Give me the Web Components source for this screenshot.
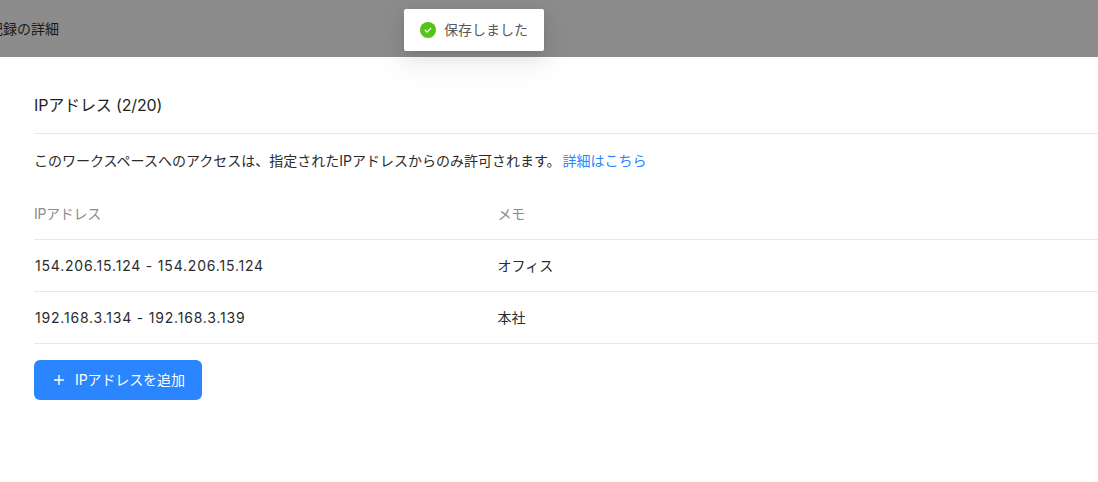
<!DOCTYPE html>
<html lang="ja">
<head>
<meta charset="utf-8">
<title>IPアドレス</title>
<style>
  html, body { margin: 0; height: 100%; background: #fff; overflow: hidden; }
  body { font-family: Inter, "Noto Sans CJK JP", sans-serif; font-size: 14px; color: #262626; }
</style>
</head>
<body>
<ip-page></ip-page>
<script>
const FONT = `Inter, "Noto Sans CJK JP", sans-serif`;

class TopBar extends HTMLElement {
  constructor() {
    super();
    this.attachShadow({ mode: 'open' }).innerHTML = `
      <style>
        :host { display: flex; align-items: center; height: 57px; background: #8c8c8c; overflow: hidden; color: #1a1a1a; font: 14px/22px ${FONT}; }
        span { margin-left: -11px; white-space: nowrap; }
      </style>
      <span><slot></slot></span>`;
  }
}

class SaveToast extends HTMLElement {
  constructor() {
    super();
    this.attachShadow({ mode: 'open' }).innerHTML = `
      <style>
        :host { position: absolute; top: 9px; left: 404px; width: 140px; height: 42px; box-sizing: border-box; padding-left: 16px; display: flex; align-items: center; gap: 8px; background: #fff; border-radius: 2px; box-shadow: 0 6px 16px rgba(0,0,0,.08), 0 9px 28px 8px rgba(0,0,0,.05), 0 3px 6px -4px rgba(0,0,0,.12); font: 14px/22px ${FONT}; color: #595959; white-space: nowrap; }
        svg { width: 16px; height: 16px; flex: none; }
        span { margin-bottom: 1px; }
      </style>
      <svg viewBox="0 0 16 16"><circle cx="8" cy="8" r="8" fill="#52c41a"/><path d="M5.2 8.2l1.9 1.9L10.8 6.4" fill="none" stroke="#fff" stroke-width="1.3" stroke-linecap="round" stroke-linejoin="round"/></svg>
      <span><slot></slot></span>`;
  }
}

class IpRow extends HTMLElement {
  constructor() {
    super();
    this.attachShadow({ mode: 'open' }).innerHTML = `
      <style>
        :host { display: grid; grid-template-columns: 464px 1fr; align-items: center; height: 52px; box-sizing: border-box; border-bottom: 1px solid #e8e8e8; font: 14px/20px ${FONT}; color: #2b2b2b; }
        :host([head]) { color: #8c8c8c; letter-spacing: -.3px; }
        div { white-space: nowrap; }
        div + div { margin-left: -.5px; }
      </style>
      <div><slot name="ip"></slot></div>
      <div><slot name="memo"></slot></div>`;
  }
}

class AddButton extends HTMLElement {
  constructor() {
    super();
    this.attachShadow({ mode: 'open' }).innerHTML = `
      <style>
        :host { display: inline-flex; align-items: center; gap: 10px; width: 168px; height: 40px; box-sizing: border-box; padding-left: 19px; background: #2a85ff; border-radius: 6px; color: #fff; font: 14px/20px ${FONT}; letter-spacing: -.1px; white-space: nowrap; }
        svg { width: 12px; height: 12px; flex: none; }
      </style>
      <svg viewBox="0 0 12 12"><path d="M6 1v10M1 6h10" stroke="#fff" stroke-width="1.4" fill="none"/></svg>
      <span><slot></slot></span>`;
  }
}

class IpPage extends HTMLElement {
  constructor() {
    super();
    this.attachShadow({ mode: 'open' }).innerHTML = `
      <style>
        :host { display: block; position: relative; font: 14px/22px ${FONT}; color: #262626; }
        main { padding: 0 0 0 34px; }
        h2 { margin: 0; height: 77px; box-sizing: border-box; padding-top: 36px; font: 400 16px/24px ${FONT}; letter-spacing: -.15px; color: #1f1f1f; border-bottom: 1px solid #e8e8e8; }
        p { margin: 0; padding-top: 17px; height: 54px; box-sizing: border-box; font: 14px/20px ${FONT}; color: #2b2b2b; white-space: nowrap; }
        a { color: #2a85ff; text-decoration: none; margin-left: 2px; }
        .num { letter-spacing: .8px; padding-left: 1px; }
        add-button { margin-top: 16px; }
      </style>
      <top-bar>記録の詳細</top-bar>
      <save-toast>保存しました</save-toast>
      <main>
        <h2>IPアドレス (2/20)</h2>
        <p>このワークスペースへのアクセスは、指定されたIPアドレスからのみ許可されます。<a href="#">詳細はこちら</a></p>
        <ip-row head><span slot="ip">IPアドレス</span><span slot="memo">メモ</span></ip-row>
        <ip-row><span slot="ip" class="num">154.206.15.124 - 154.206.15.124</span><span slot="memo">オフィス</span></ip-row>
        <ip-row><span slot="ip" class="num">192.168.3.134 - 192.168.3.139</span><span slot="memo">本社</span></ip-row>
        <add-button>IPアドレスを追加</add-button>
      </main>`;
  }
}

customElements.define('top-bar', TopBar);
customElements.define('save-toast', SaveToast);
customElements.define('ip-row', IpRow);
customElements.define('add-button', AddButton);
customElements.define('ip-page', IpPage);
</script>
</body>
</html>
